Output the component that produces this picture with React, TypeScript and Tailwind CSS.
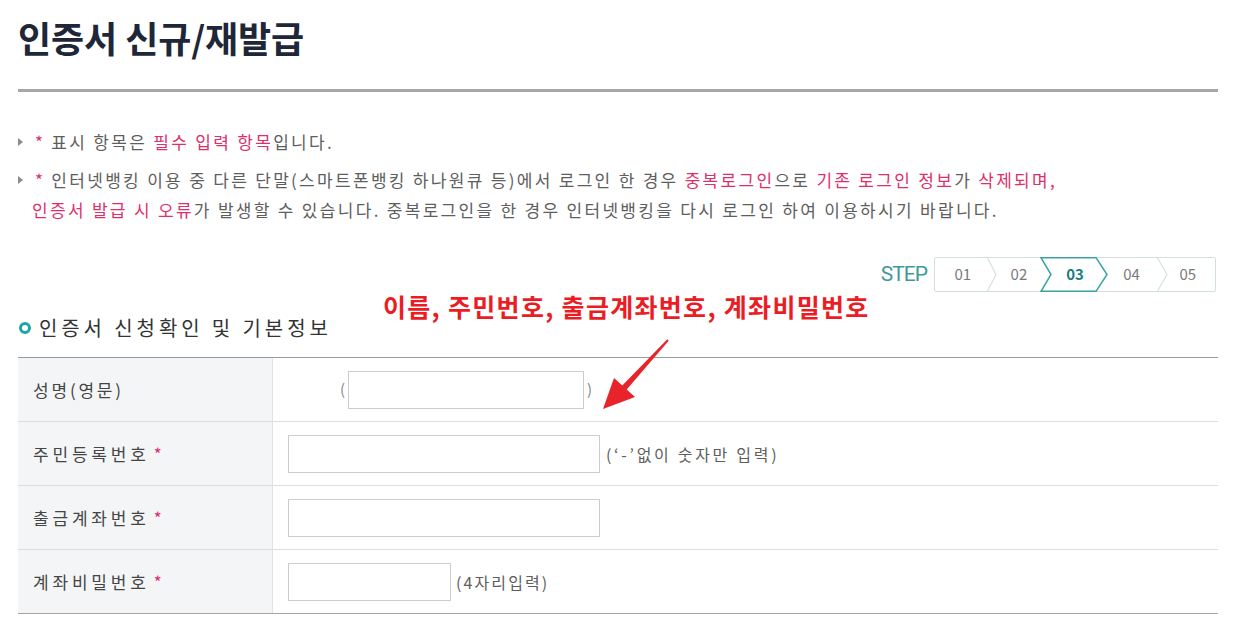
import type { FC } from 'react';

const Star: FC = () => <span className="text-[#e0306f]">*</span>;

const BulletArrow: FC = () => (
    <svg width="5" height="8" viewBox="0 0 5 8" className="shrink-0">
        <path d="M0 0 L5 4 L0 8 Z" fill="#8c8c8c" />
    </svg>
);

const Pink: FC<{ children: string }> = ({ children }) => <span className="text-[#de2f6b]">{children}</span>;

const StepBar: FC = () => {
    const steps = [
        { n: '01', w: 'w-[56px]' },
        { n: '02', w: 'w-[57px]' },
        { n: '03', w: 'w-[56px]' },
        { n: '04', w: 'w-[58px]' },
        { n: '05', w: 'w-[55px]' }
    ];
    return (
        <div className="flex items-center gap-[7px]">
            <span className="font-['Roboto',sans-serif] text-[21px] tracking-[-1px] text-[#3f9a9c] leading-none">STEP</span>
            <div className="relative w-[282px] h-[35px] border border-[#d3dfde] rounded-[2px] flex">
                {/* chevrons */}
                <svg className="absolute -left-px -top-px" width="282" height="35" viewBox="0 0 282 35">
                    <path d="M53 0 L62 17.5 L53 35" fill="none" stroke="#d5e1e0" strokeWidth="1.2" />
                    <path d="M223 0 L233 17.5 L223 35" fill="none" stroke="#d5e1e0" strokeWidth="1.2" />
                    <path d="M107 0.7 L162 0.7 L173 17.5 L162 34.3 L107 34.3 L117 17.5 Z" fill="none" stroke="#3aa2a4" strokeWidth="1.5" />
                </svg>
                {steps.map(s => (
                    <div
                        key={s.n}
                        className={`${s.w} relative flex items-center justify-center text-[15px] ${s.n === '03' ? 'font-bold text-[#17807f]' : 'text-[#7a7a7a]'}`}
                    >
                        {s.n}
                    </div>
                ))}
            </div>
        </div>
    );
};

const App: FC = () => {
    return (
        <div className="relative w-[1233px] h-[621px] overflow-hidden bg-white font-['Noto_Sans_CJK_KR',sans-serif]">
            <div className="pl-[18px] pr-[15px] pt-[14px]">
                <h1 className="text-[36px] leading-[46px] font-bold tracking-[-0.1px] text-[#1e2738]">인증서 신규/재발급</h1>

                <div className="h-[3px] bg-[#a7a7a7] mt-[29px]" />

                {/* 안내 문구 */}
                <ul className="mt-[35px] flex flex-col gap-[8px] text-[17px] tracking-[2.3px] text-[#5e5e5e]">
                    <li className="flex items-start">
                        <span className="h-[30px] flex items-center"><BulletArrow /></span>
                        <div className="leading-[30px] pl-[12px]">
                            <Star /> 표시 항목은 <Pink>필수 입력 항목</Pink>입니다.
                        </div>
                    </li>
                    <li className="flex items-start">
                        <span className="h-[30px] flex items-center"><BulletArrow /></span>
                        <div className="leading-[30px] pl-[12px]">
                            <Star /> 인터넷뱅킹 이용 중 다른 단말(스마트폰뱅킹 하나원큐 등)에서 로그인 한 경우 <Pink>중복로그인</Pink>으로 <Pink>기존 로그인 정보</Pink>가 <Pink>삭제되며,</Pink>
                            <br />
                            <span className="-ml-[3px]"><Pink>인증서 발급 시 오류</Pink>가 발생할 수 있습니다. 중복로그인을 한 경우 인터넷뱅킹을 다시 로그인 하여 이용하시기 바랍니다.</span>
                        </div>
                    </li>
                </ul>

                <div className="mt-[32px] flex justify-end pr-[2px]">
                    <StepBar />
                </div>

                {/* 섹션 제목 */}
                <div className="mt-[21px] h-[30px] flex items-center gap-[8px]">
                    <span className="w-[12px] h-[12px] rounded-full border-[3px] border-[#1ba4aa] ml-px" />
                    <h2 className="text-[20px] tracking-[3.9px] text-[#333333]">인증서 신청확인 및 기본정보</h2>
                </div>

                {/* 입력 테이블 */}
                <div className="mt-[14px] border-t border-[#9a9a9a] text-[17px] tracking-[3.8px] text-[#454545]">
                    <div className="flex h-[64px] border-b border-[#dddddd]">
                        <div className="w-[255px] bg-[#f3f5f6] border-r border-[#e1e1e1] pl-[15px] flex items-center tracking-[2.8px]">성명(영문)</div>
                        <div className="flex items-center pl-[67px] text-[15px] text-[#888888] tracking-normal">
                            <span>(</span>
                            <div className="ml-[3px] w-[236px] h-[38px] border border-[#cccccc] bg-white" />
                            <span className="ml-[3px]">)</span>
                        </div>
                    </div>
                    <div className="flex h-[64px] border-b border-[#dddddd]">
                        <div className="w-[255px] bg-[#f3f5f6] border-r border-[#e1e1e1] pl-[15px] flex items-center gap-[4px]">주민등록번호 <Star /></div>
                        <div className="flex items-center pl-[15px] gap-[6px]">
                            <input className="w-[312px] h-[38px] border border-[#cccccc] bg-white outline-none" />
                            <span className="text-[16px] tracking-[2.7px] text-[#5e5e5e]">(‘-’없이 숫자만 입력)</span>
                        </div>
                    </div>
                    <div className="flex h-[64px] border-b border-[#dddddd]">
                        <div className="w-[255px] bg-[#f3f5f6] border-r border-[#e1e1e1] pl-[15px] flex items-center gap-[4px]">출금계좌번호 <Star /></div>
                        <div className="flex items-center pl-[15px]">
                            <input className="w-[312px] h-[38px] border border-[#cccccc] bg-white outline-none" />
                        </div>
                    </div>
                    <div className="flex h-[64px] border-b border-[#a5a5a5]">
                        <div className="w-[255px] bg-[#f3f5f6] border-r border-[#e1e1e1] pl-[15px] flex items-center gap-[4px]">계좌비밀번호 <Star /></div>
                        <div className="flex items-center pl-[15px] gap-[5px]">
                            <input className="w-[163px] h-[38px] border border-[#cccccc] bg-white outline-none" />
                            <span className="text-[16px] tracking-[2.1px] text-[#5e5e5e]">(4자리입력)</span>
                        </div>
                    </div>
                </div>
            </div>

            {/* 붉은 주석 */}
            <div className="absolute left-[383px] top-[289px] text-[25px] leading-[34px] font-bold tracking-[1.3px] text-[#ec1c24]">
                이름, 주민번호, 출금계좌번호, 계좌비밀번호
            </div>
            <svg className="absolute left-0 top-0 pointer-events-none" width="1233" height="621" viewBox="0 0 1233 621">
                <polygon
                    points="603,409 614,378 622.3,385.4 667.3,339.3 668.7,340.7 626.7,389.6 635,397"
                    fill="#e8242b"
                />
            </svg>
        </div>
    );
};

export default App;
